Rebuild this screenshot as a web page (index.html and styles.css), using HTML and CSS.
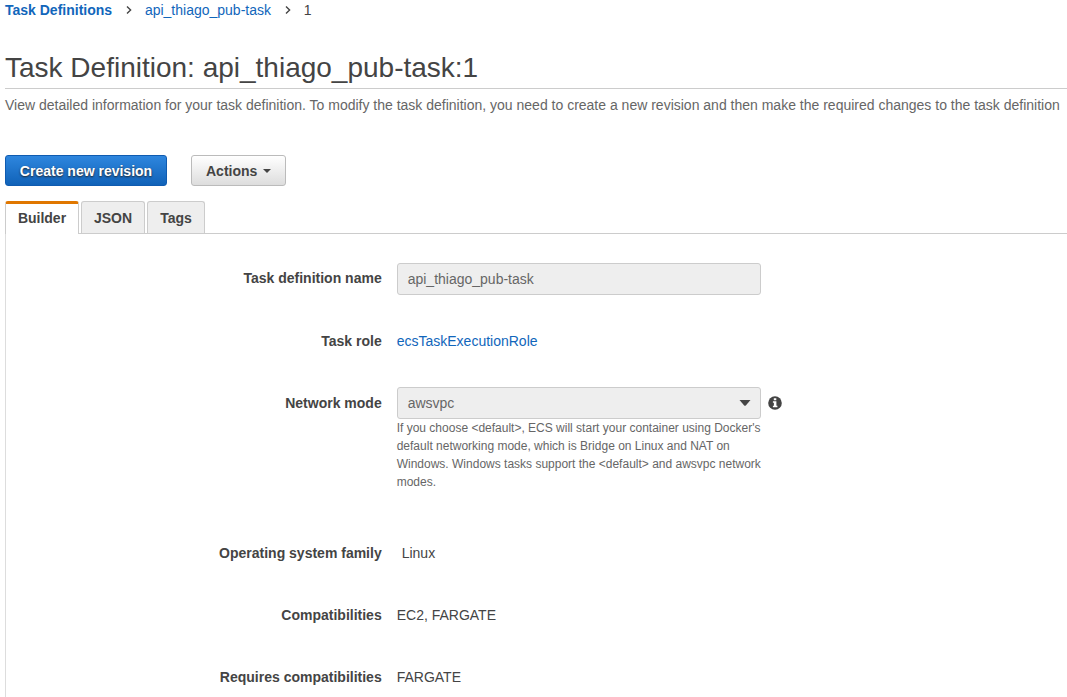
FILE: index.html
```
<!DOCTYPE html>
<html lang="en">
<head>
<meta charset="utf-8">
<title>Task Definition: api_thiago_pub-task:1</title>
<link rel="stylesheet" href="styles.css">
</head>
<body>
<main class="page">
  <nav class="breadcrumb">
    <a class="link strong" href="#">Task Definitions</a>
    <svg class="chevron" width="6" height="8" viewBox="0 0 6 8"><path d="M1 .6 4.6 4 1 7.4"/></svg>
    <a class="link" href="#">api_thiago_pub-task</a>
    <svg class="chevron" width="6" height="8" viewBox="0 0 6 8"><path d="M1 .6 4.6 4 1 7.4"/></svg>
    <span>1</span>
  </nav>
  <h1 class="title">Task Definition: api_thiago_pub-task:1</h1>
  <p class="description">View detailed information for your task definition. To modify the task definition, you need to create a new revision and then make the required changes to the task definition</p>
  <div class="toolbar">
    <button class="button primary">Create new revision</button>
    <button class="button menu">Actions <span class="caret"></span></button>
  </div>
  <div class="tabs">
    <a class="tab active">Builder</a>
    <a class="tab json">JSON</a>
    <a class="tab">Tags</a>
  </div>
  <section class="panel">
    <div class="row">
      <span class="label name-label">Task definition name</span>
      <div class="field">api_thiago_pub-task</div>
    </div>
    <div class="row">
      <span class="label">Task role</span>
      <a class="link value" href="#">ecsTaskExecutionRole</a>
    </div>
    <div class="row network">
      <span class="label">Network mode</span>
      <div class="control">
        <div class="field select">awsvpc<svg width="12" height="6" viewBox="0 0 12 6"><path fill="#444" d="M.5 0h11L6.8 5.4q-.8.8-1.6 0z"/></svg></div>
        <p class="help">If you choose &lt;default&gt;, ECS will start your container using Docker's default networking mode, which is Bridge on Linux and NAT on Windows. Windows tasks support the &lt;default&gt; and awsvpc network modes.</p>
      </div>
      <svg class="info" width="14" height="14" viewBox="0 0 14 14"><circle cx="7" cy="7" r="6.8" fill="#444"/><path fill="#fff" d="M5.8 2.2h2.5v2H5.8zM4.9 5.2h3.5v4.6h1v1.5H4.9V9.8h1V6.7h-1z"/></svg>
    </div>
    <div class="row">
      <span class="label">Operating system family</span>
      <span class="value indented">Linux</span>
    </div>
    <div class="row">
      <span class="label">Compatibilities</span>
      <span class="value">EC2, FARGATE</span>
    </div>
    <div class="row">
      <span class="label">Requires compatibilities</span>
      <span class="value">FARGATE</span>
    </div>
  </section>
</main>
</body>
</html>
```
FILE: styles.css
```
* { box-sizing: border-box; }
html, body { margin: 0; height: 100%; overflow: hidden; }
body {
  background: #fff;
  color: #444;
  font: 14px/20px "Liberation Sans", Arial, sans-serif;
}
.page {
  display: flex;
  flex-direction: column;
  height: 697px;
  padding-left: 5px;
}
.link { color: #1166bb; text-decoration: none; }
.strong { font-weight: bold; }
.breadcrumb { display: flex; align-items: center; height: 20px; }
.chevron { margin: 0 12.8px 0 14px; fill: none; stroke: #444; stroke-width: 1.4; }
.title {
  height: 41px;
  margin: 28px 0 0;
  border-bottom: 1px solid #ccc;
  font-size: 28px;
  font-weight: normal;
  line-height: 40px;
}
.description { margin: 6px 0 0; color: #666; white-space: nowrap; }
.toolbar { display: flex; gap: 24px; margin-top: 40px; }
.button {
  height: 31px;
  padding: 0 14px;
  border: 1px solid #bbb;
  border-radius: 3px;
  color: #444;
  font: bold 14px/20px "Liberation Sans", Arial, sans-serif;
  white-space: nowrap;
}
.primary {
  width: 162px;
  padding: 0;
  border-color: #0f5bb0;
  background: linear-gradient(#2e86de, #1062b8);
  color: #fff;
  text-shadow: 0 1px 2px #222;
}
.menu {
  display: flex;
  align-items: center;
  width: 95px;
  background: linear-gradient(#fff, #ddd);
}
.caret {
  margin-left: 6px;
  border: 4px solid transparent;
  border-top-color: #444;
  border-bottom: 0;
}
.tabs {
  display: flex;
  gap: 2px;
  height: 33px;
  margin-top: 15px;
  border-bottom: 1px solid #ccc;
}
.tab {
  height: 32px;
  width: 58px;
  border: 1px solid #ccc;
  border-bottom: 0;
  border-radius: 3px 3px 0 0;
  background: #eee;
  font-weight: bold;
  line-height: 32px;
  text-align: center;
}
.json { width: 64px; }
.active {
  width: 74px;
  height: 33px;
  border-top: 3px solid #e07700;
  background: #fff;
  line-height: 28px;
}
.panel { flex: 1; border-left: 1px solid #ddd; padding-top: 29px; }
.row { display: flex; align-items: flex-start; height: 62px; }
.label {
  width: 375.7px;
  margin-right: 15px;
  padding-top: 6px;
  font-weight: bold;
  text-align: right;
}
.name-label { padding-top: 5px; }
.value { padding-top: 6px; }
.indented { padding-left: 5px; }
.field {
  width: 364px;
  height: 32px;
  padding: 0 10px;
  border: 1px solid #ccc;
  border-radius: 3px;
  background: #eee;
  color: #666;
  line-height: 30px;
}
.select { display: flex; align-items: center; justify-content: space-between; padding-right: 9px; }
.network { height: 150px; }
.control { width: 366px; }
.help { margin: 0; color: #666; font-size: 12px; line-height: 18px; }
.info { margin: 9px 0 0 5px; }
```
